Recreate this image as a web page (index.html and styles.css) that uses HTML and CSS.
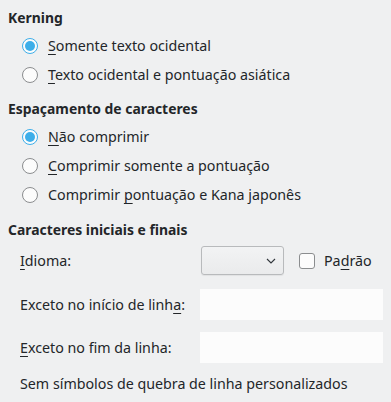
FILE: index.html
```html
<!DOCTYPE html>
<html lang="pt">
<head>
<meta charset="utf-8">
<link rel="stylesheet" href="styles.css">
</head>
<body>
<div class="page">
  <div class="heading h-first">Kerning</div>
  <div class="opt"><span class="radio on"></span><span><u>S</u>omente texto ocidental</span></div>
  <div class="opt"><span class="radio"></span><span><u>T</u>exto ocidental e pontuação asiática</span></div>

  <div class="heading">Espaçamento de caracteres</div>
  <div class="opt"><span class="radio on"></span><span><u>N</u>ão comprimir</span></div>
  <div class="opt"><span class="radio"></span><span><u>C</u>omprimir somente a pontuação</span></div>
  <div class="opt"><span class="radio"></span><span>Comprimir <u>p</u>ontuação e Kana japonês</span></div>

  <div class="heading h-last">Caracteres iniciais e finais</div>
  <div class="form">
    <div class="row row-lang">
      <span class="label"><u>I</u>dioma:</span>
      <div class="lang">
        <div class="combo">
          <svg class="chev" width="10" height="6" viewBox="0 0 10 6"><path d="M1 1 L5 5 L9 1" fill="none" stroke="#31363b" stroke-width="1.1"/></svg>
        </div>
        <span class="check"></span>
        <span>Pa<u>d</u>rão</span>
      </div>
    </div>
    <div class="row row-a">
      <span class="label">Exceto no início de linh<u>a</u>:</span>
      <div class="field"></div>
    </div>
    <div class="row row-b">
      <span class="label"><u>E</u>xceto no fim da linha:</span>
      <div class="field"></div>
    </div>
    <div class="note">Sem símbolos de quebra de linha personalizados</div>
  </div>
</div>
</body>
</html>
```
FILE: styles.css
```css
html, body {
  margin: 0;
  padding: 0;
  background: #eff0f1;
}
body {
  font-family: "Noto Sans", "Open Sans", sans-serif;
  font-size: 14.25px;
  color: #232629;
}
u {
  text-decoration-thickness: 1px;
  text-underline-offset: 3px;
}
.page {
  display: flex;
  flex-direction: column;
  padding: 3px 8px 0 8px;
}
.heading {
  font-weight: bold;
  font-size: 13.9px;
  height: 28px;
  display: flex;
  align-items: center;
  margin-top: 5px;
}
.h-first { margin-top: 0; }
.h-last { margin-top: 6px; }
.opt {
  height: 29px;
  display: flex;
  align-items: center;
  padding-left: 14px;
  gap: 10px;
}
.radio {
  width: 16px;
  height: 16px;
  box-sizing: border-box;
  border-radius: 50%;
  border: 1px solid #8b8d8f;
  background: #fcfcfc;
  flex: none;
  position: relative;
}
.radio.on {
  border: 1.5px solid #3daee9;
  background: #fcfcfc;
}
.radio.on::after {
  content: "";
  position: absolute;
  left: 2px;
  top: 2px;
  right: 2px;
  bottom: 2px;
  border-radius: 50%;
  background: #3daee9;
}
.form {
  padding-left: 12px;
  display: flex;
  flex-direction: column;
}
.row {
  display: grid;
  grid-template-columns: 180px 1fr;
  align-items: center;
}
.row-lang { margin-top: 3px; height: 29px; }
.row-a { margin-top: 14px; }
.row-b { margin-top: 12px; }
.lang {
  display: flex;
  align-items: center;
  padding-left: 1px;
}
.combo {
  width: 83px;
  height: 29px;
  box-sizing: border-box;
  border: 1px solid #b8babc;
  border-radius: 3px;
  background: linear-gradient(#f2f3f4, #eaebec);
  display: flex;
  align-items: center;
  justify-content: flex-end;
  padding-right: 7px;
  box-shadow: 0 1px 1px rgba(0,0,0,0.06);
}
.check {
  width: 16px;
  height: 16px;
  box-sizing: border-box;
  border: 1px solid #8b8d8f;
  border-radius: 3px;
  background: #fcfcfc;
  margin-left: 15px;
  margin-right: 9px;
}
.field {
  height: 31px;
  background: #fcfcfc;
}
.note {
  height: 26px;
  display: flex;
  align-items: center;
  margin-top: 7px;
}
```
